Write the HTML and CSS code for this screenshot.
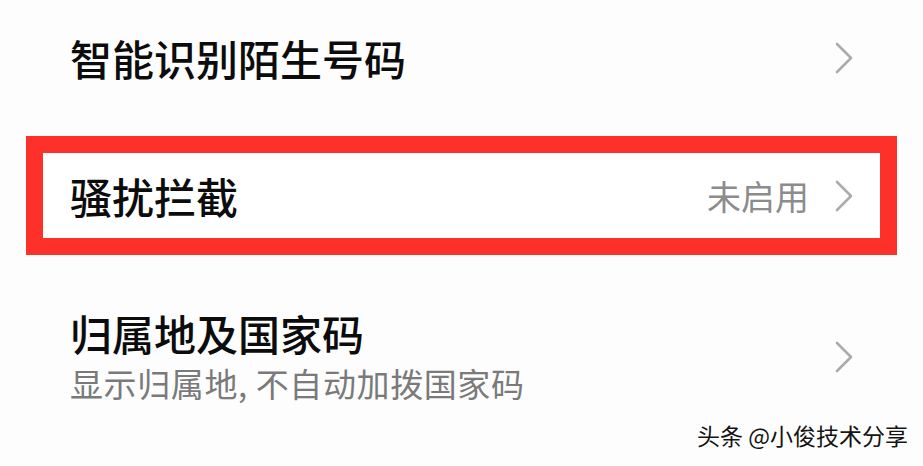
FILE: index.html
```html
<!DOCTYPE html>
<html lang="zh-CN">
<head>
    <meta charset="UTF-8" />
    <meta name="viewport" content="width=device-width, initial-scale=1" />
    <title>骚扰拦截设置</title>
    <link rel="stylesheet" href="styles.css">
</head>
<body>

<div class="settings">
    <!-- 智能识别 -->
    <div class="item">
        <div class="item-text">
            <div class="item-title">智能识别陌生号码</div>
        </div>
        <svg class="arrow" viewBox="0 0 18 32"><path d="M2 2 L16 16 L2 30" /></svg>
    </div>

    <!-- 骚扰拦截（红框标注） -->
    <div class="item marked">
        <div class="item-text">
            <div class="item-title">骚扰拦截</div>
        </div>
        <span class="item-value">未启用</span>
        <svg class="arrow" viewBox="0 0 18 32"><path d="M2 2 L16 16 L2 30" /></svg>
    </div>

    <!-- 归属地 -->
    <div class="item two-line">
        <div class="item-text">
            <div class="item-title">归属地及国家码</div>
            <div class="item-desc">显示归属地, 不自动加拨国家码</div>
        </div>
        <svg class="arrow" viewBox="0 0 18 32"><path d="M2 2 L16 16 L2 30" /></svg>
    </div>
</div>

<div class="watermark">头条 @小俊技术分享</div>

</body>
</html>
```

FILE: styles.css
```css
* { box-sizing: border-box; margin: 0; padding: 0; }
body {
    font-family: "Noto Sans CJK SC", "Noto Sans", sans-serif;
    background: #fdfdfd;
    color: #111;
    width: 923px;
    height: 466px;
    position: relative;
    overflow: hidden;
}
.settings {
    display: flex;
    flex-direction: column;
}
.item {
    display: flex;
    align-items: center;
    height: 124px;
    padding: 0 70px 8px;
}
.item-text { flex: 1; }
.item-title {
    font-size: 42px;
    font-weight: 500;
    line-height: 48px;
    color: #0c0c0c;
}
.item-value {
    font-size: 34px;
    color: #8c8c8c;
    margin-right: 26px;
    line-height: 40px;
}
.arrow {
    width: 18px;
    height: 32px;
    flex: none;
}
.arrow path {
    fill: none;
    stroke: #ababab;
    stroke-width: 2.6;
    stroke-linecap: round;
    stroke-linejoin: round;
}
/* 红框 */
.item.marked {
    margin: 12px 26px 0;
    height: 119px;
    border: 17px solid #fd3129;
    padding: 0 27px;
    background: #fff;
}
.item.two-line {
    height: 190px;
    padding-top: 14px;
    padding-bottom: 0;
}
.two-line .item-title { line-height: 44px; }
.item-desc {
    font-size: 33px;
    letter-spacing: 0.6px;
    color: #7a7a7a;
    line-height: 40px;
    margin-top: 8px;
}
.watermark {
    position: absolute;
    right: 15px;
    bottom: 14px;
    font-size: 23px;
    color: #141414;
    text-shadow: 1px 1px 0 #fff, -1px -1px 0 #fff, 1px -1px 0 #fff, -1px 1px 0 #fff;
}
```
